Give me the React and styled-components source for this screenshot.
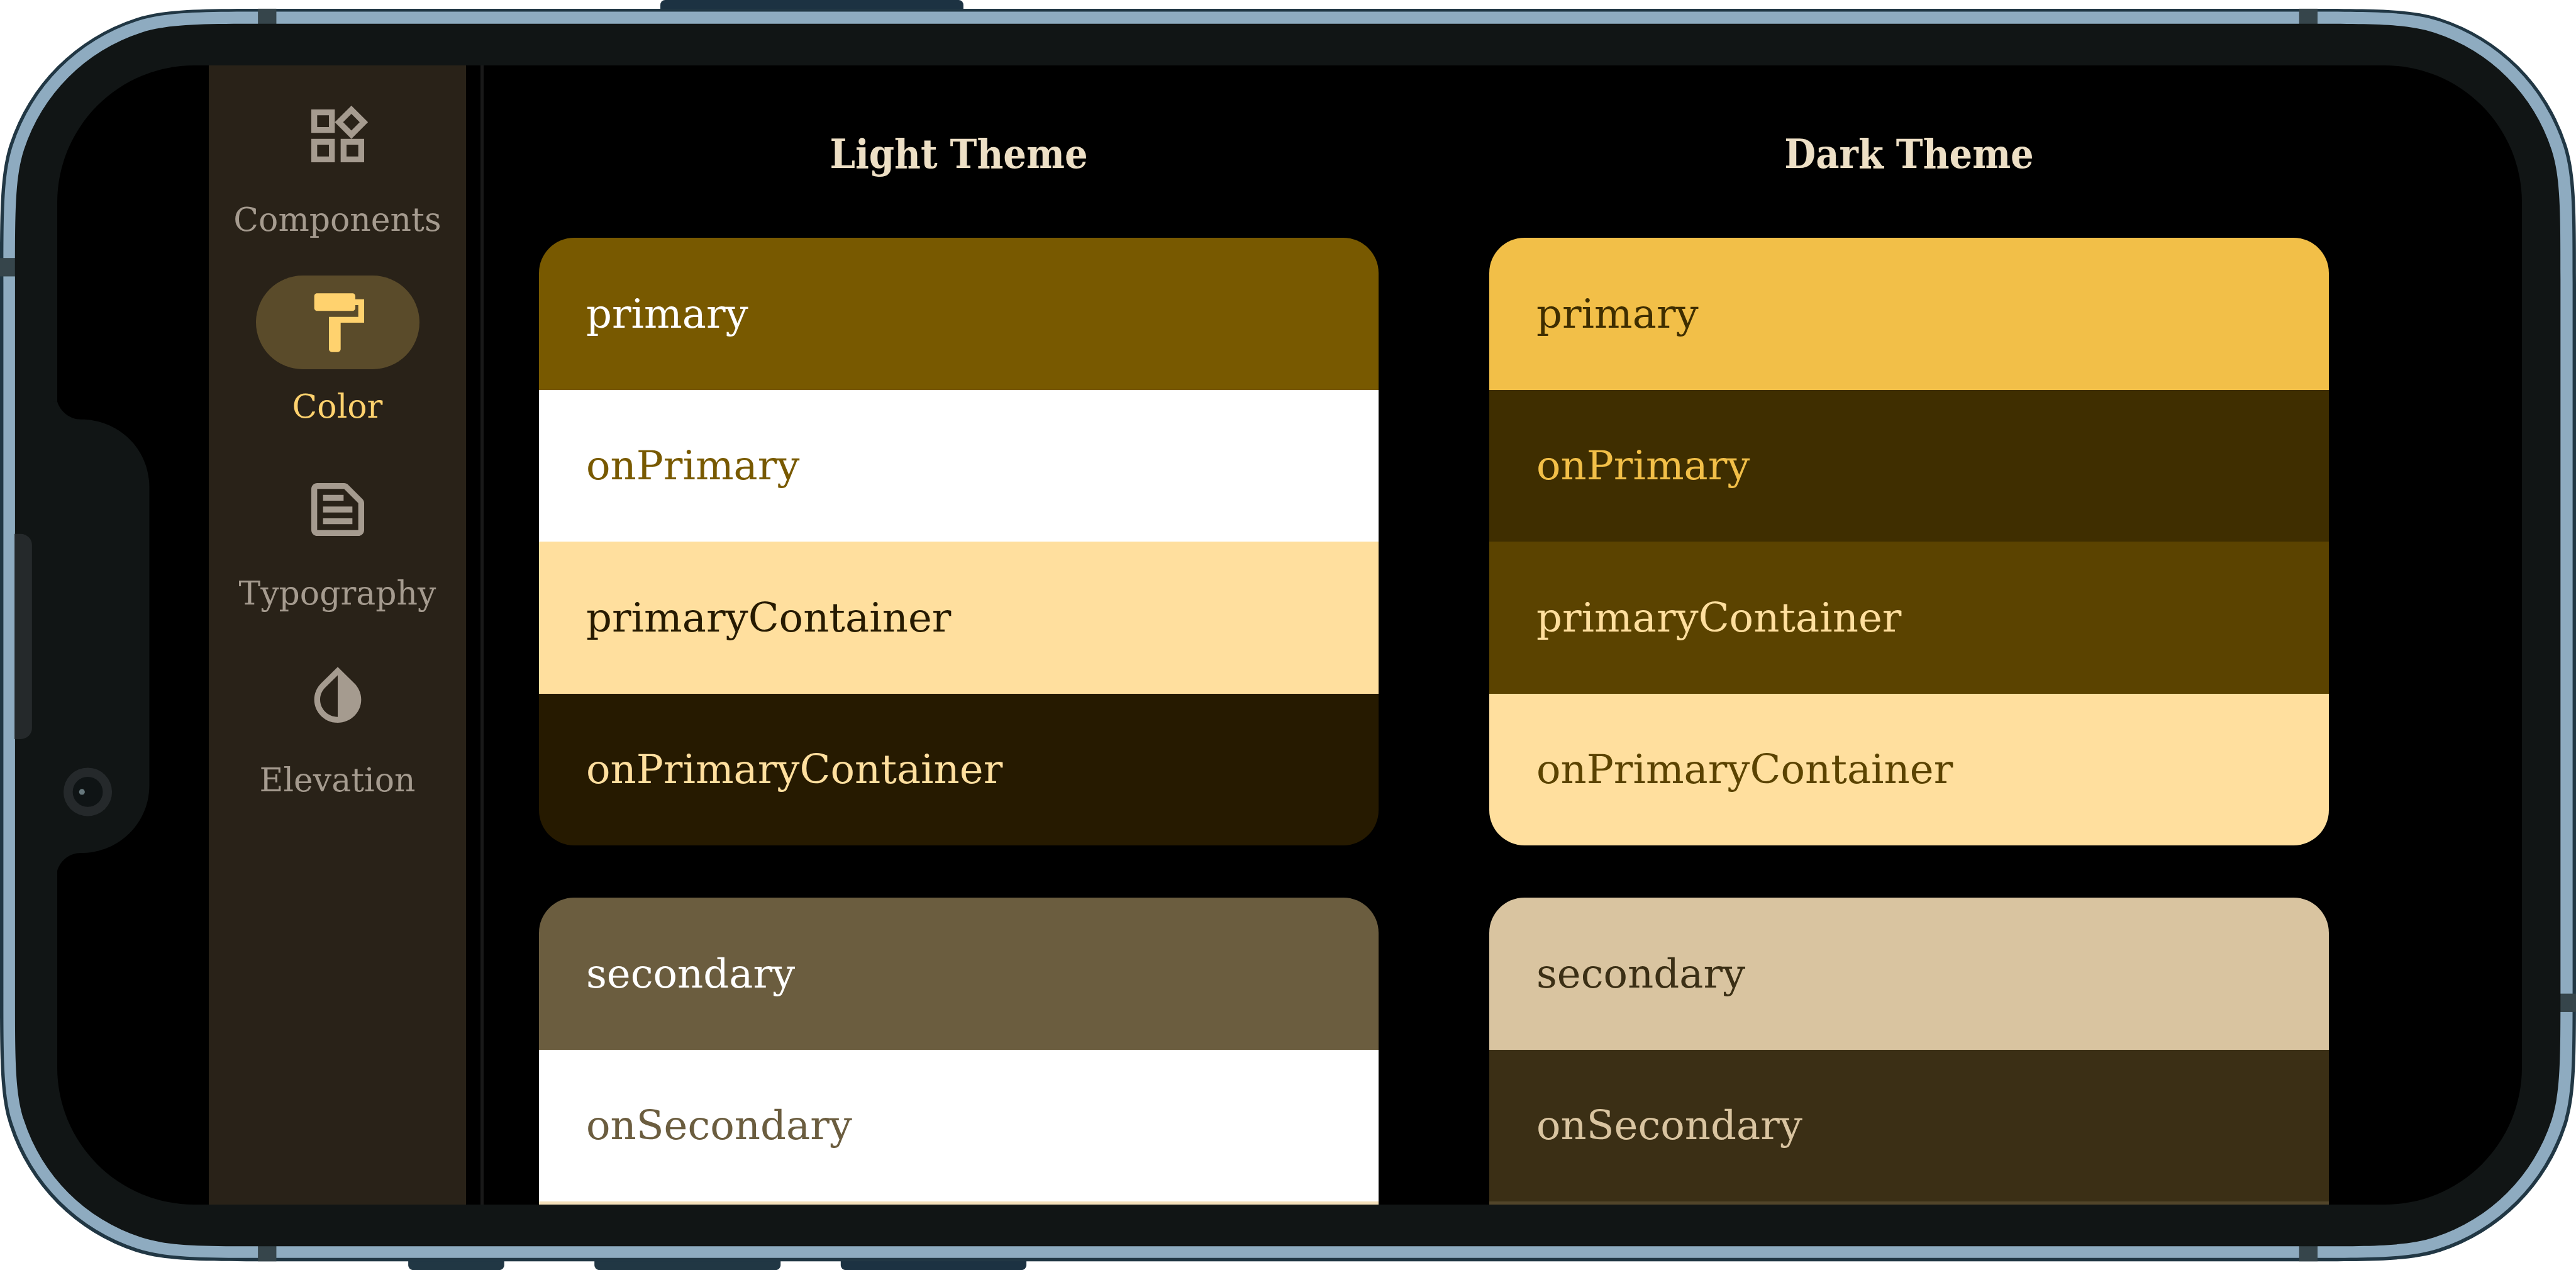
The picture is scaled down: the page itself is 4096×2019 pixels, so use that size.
import React, { useState } from "react";
import styled, { createGlobalStyle } from "styled-components";

const GlobalStyle = createGlobalStyle`
  *, *::before, *::after { box-sizing: border-box; }
  body {
    margin: 0;
    background: #ffffff;
    font-family: "Roboto Slab", "DejaVu Serif", serif;
  }
  h2, ul { margin: 0; padding: 0; }
`;

const Device = styled.main`
  position: relative;
  display: flex;
  width: 100%;
  aspect-ratio: 5313 / 2619;
  padding: 104px 86px 104px 91px;
  overflow: hidden;
`;

const DeviceArt = styled.svg`
  position: absolute;
  inset: 0;
  width: 100%;
  height: 100%;
  pointer-events: none;
`;

const Screen = styled.div`
  position: relative;
  display: flex;
  flex: 1;
  min-width: 0;
  min-height: 0;
  padding-left: 241px;
  border-radius: 218px;
  background: #000000;
  overflow: hidden;
`;

const Rail = styled.nav`
  display: flex;
  flex-direction: column;
  gap: 53px;
  flex: none;
  width: 409px;
  padding-top: 37px;
  background: #292218;
`;

const Destination = styled.button`
  display: flex;
  flex-direction: column;
  align-items: center;
  gap: 23px;
  padding: 0;
  border: 0;
  background: none;
  font: inherit;
  font-size: 52px;
  line-height: 72px;
  color: ${(p) => (p.$selected ? "#ffd26e" : "#a59b8f")};
  cursor: pointer;
`;

const Indicator = styled.span`
  display: flex;
  align-items: center;
  justify-content: center;
  width: 260px;
  height: 149px;
  border-radius: 75px;
  background: ${(p) => (p.$selected ? "#5a4b2a" : "transparent")};
`;

const Glyph = styled.svg`
  width: 112px;
  height: 112px;
  fill: currentColor;
`;

const Divider = styled.div`
  flex: none;
  width: 5px;
  margin-left: 23px;
  background: #191919;
`;

const Schemes = styled.div`
  display: flex;
  flex: 1;
  min-width: 0;
  gap: 176px;
  padding: 0 307px 0 88px;
`;

const Scheme = styled.section`
  display: flex;
  flex-direction: column;
  flex: 1;
  min-width: 0;
`;

const SchemeTitle = styled.h2`
  flex: none;
  padding: 96px 0 88px;
  font-family: "Roboto Slab", "DejaVu Serif Condensed", "DejaVu Serif", serif;
  font-size: 64px;
  line-height: 90px;
  font-weight: 700;
  text-align: center;
  color: #eddfc5;
`;

const Groups = styled.div`
  display: flex;
  flex-direction: column;
  gap: 83px;
`;

const Group = styled.ul`
  display: flex;
  flex-direction: column;
  flex: none;
  height: 966px;
  border-radius: 56px;
  list-style: none;
  overflow: hidden;
`;

const Swatch = styled.li`
  display: flex;
  align-items: center;
  flex: 1;
  padding: 0 75px;
  font-size: 64px;
  line-height: 90px;
  background: ${(p) => p.$bg};
  color: ${(p) => p.$fg};
`;

const destinations = [
  {
    label: "Components",
    path: "M16.66 4.52l2.83 2.83-2.83 2.83-2.83-2.83 2.83-2.83M9 5v4H5V5h4m10 10v4h-4v-4h4M9 15v4H5v-4h4m7.66-13.31L11 7.34 16.66 13l5.66-5.66-5.66-5.65zM11 3H3v8h8V3zm10 10h-8v8h8v-8zm-10 0H3v8h8v-8z",
  },
  {
    label: "Color",
    path: "M18 4V3c0-.55-.45-1-1-1H5c-.55 0-1 .45-1 1v4c0 .55.45 1 1 1h12c.55 0 1-.45 1-1V6h1v4H9v11c0 .55.45 1 1 1h2c.55 0 1-.45 1-1v-9h8V4h-3z",
  },
  {
    label: "Typography",
    path: "M14.17 5L19 9.83V19H5V5h9.17m0-2H5c-1.1 0-2 .9-2 2v14c0 1.1.9 2 2 2h14c1.1 0 2-.9 2-2V9.83c0-.53-.21-1.04-.59-1.41l-4.83-4.83c-.37-.38-.88-.59-1.41-.59zM7 15h10v2H7v-2zm0-4h10v2H7v-2zm0-4h7v2H7V7z",
  },
  {
    label: "Elevation",
    path: "M12 4.81V19c-3.31 0-6-2.63-6-5.87 0-1.56.62-3.03 1.75-4.14L12 4.81M12 2L6.35 7.56C4.9 8.99 4 10.96 4 13.13 4 17.48 7.58 21 12 21s8-3.52 8-7.87c0-2.17-.9-4.14-2.35-5.57L12 2z",
  },
];

// Each swatch is [name, background, text colour].
const schemes = [
  {
    title: "Light Theme",
    groups: [
      [
        ["primary", "#785900", "#ffffff"],
        ["onPrimary", "#ffffff", "#785900"],
        ["primaryContainer", "#ffdf9e", "#261a00"],
        ["onPrimaryContainer", "#261a00", "#ffdf9e"],
      ],
      [
        ["secondary", "#6b5d3f", "#ffffff"],
        ["onSecondary", "#ffffff", "#6b5d3f"],
        ["", "#f5e0bb", "#241a04"],
        ["", "#241a04", "#f5e0bb"],
      ],
    ],
  },
  {
    title: "Dark Theme",
    groups: [
      [
        ["primary", "#f2bf48", "#3f2e00"],
        ["onPrimary", "#3f2e00", "#f2bf48"],
        ["primaryContainer", "#5b4300", "#ffdf9e"],
        ["onPrimaryContainer", "#ffdf9e", "#5b4300"],
      ],
      [
        ["secondary", "#d9c4a0", "#3b2f15"],
        ["onSecondary", "#3b2f15", "#d9c4a0"],
        ["", "#52452a", "#f5e0bb"],
        ["", "#f5e0bb", "#52452a"],
      ],
    ],
  },
];

// Rounded rectangle whose corners ease from the straight edge into the arc.
function smoothRect(x, y, w, h, r) {
  const k = 0.4;
  const rad = Math.PI / 180;
  const theta = 45 * k * rad;
  const p = (1 + k) * r;
  const c = r * Math.tan(theta / 2) * Math.cos(theta);
  const d = c * Math.tan(theta);
  const s = Math.sin(45 * (1 - k) * rad) * r * Math.SQRT2;
  const b = (p - s - c - d) / 3;
  const a = 2 * b;
  return [
    `M${x + w - p} ${y}`,
    `c${a} 0 ${a + b} 0 ${a + b + c} ${d}`,
    `a${r} ${r} 0 0 1 ${s} ${s}`,
    `c${d} ${c} ${d} ${b + c} ${d} ${a + b + c}`,
    `V${y + h - p}`,
    `c0 ${a} 0 ${a + b} ${-d} ${a + b + c}`,
    `a${r} ${r} 0 0 1 ${-s} ${s}`,
    `c${-c} ${d} ${-(b + c)} ${d} ${-(a + b + c)} ${d}`,
    `H${x + p}`,
    `c${-a} 0 ${-(a + b)} 0 ${-(a + b + c)} ${-d}`,
    `a${r} ${r} 0 0 1 ${-s} ${-s}`,
    `c${-d} ${-c} ${-d} ${-(b + c)} ${-d} ${-(a + b + c)}`,
    `V${y + p}`,
    `c0 ${-a} 0 ${-(a + b)} ${d} ${-(a + b + c)}`,
    `a${r} ${r} 0 0 1 ${s} ${-s}`,
    `c${c} ${-d} ${b + c} ${-d} ${a + b + c} ${-d}`,
    "Z",
  ].join("");
}

function DeviceBody() {
  return (
    <DeviceArt viewBox="0 0 5313 2619" preserveAspectRatio="none" aria-hidden="true">
      <g fill="#1c3242">
        <rect x="1362" y="0" width="625" height="40" rx="10" />
        <rect x="1734" y="2580" width="383" height="39" rx="10" />
      </g>
      <g fill="#213744">
        <rect x="842" y="2580" width="198" height="39" rx="10" />
        <rect x="1226" y="2580" width="384" height="39" rx="10" />
      </g>
      <path d={smoothRect(0, 18, 5313, 2583, 405)} fill="#213744" />
      <path d={smoothRect(7, 24, 5299, 2570, 399)} fill="#8eabc0" />
      <g fill="#36454b">
        <rect x="532" y="18" width="38" height="40" />
        <rect x="4742" y="18" width="38" height="40" />
        <rect x="532" y="2560" width="38" height="41" />
        <rect x="4742" y="2560" width="38" height="41" />
        <rect x="0" y="532" width="40" height="38" />
        <rect x="5270" y="2049" width="43" height="38" />
      </g>
      <path d={smoothRect(31, 49, 5250, 2521, 376)} fill="#111515" />
    </DeviceArt>
  );
}

function Notch() {
  return (
    <DeviceArt viewBox="0 0 5313 2619" preserveAspectRatio="none" aria-hidden="true">
      <path
        d="M110 828H118C124 848 143 865 167 865C245 865 308 926 308 1004V1619C308 1698 245 1759 167 1759C143 1759 124 1775 118 1796H110Z"
        fill="#111515"
      />
      <path d="M30 1101H43A23 23 0 0 1 66 1124V1501A23 23 0 0 1 43 1524H30Z" fill="#25292b" />
      <circle cx="181" cy="1633" r="50" fill="#25292b" />
      <circle cx="181" cy="1633" r="31" fill="#0f1415" />
      <circle cx="169" cy="1633" r="6" fill="#66777c" />
    </DeviceArt>
  );
}

export default function App() {
  const [selected, setSelected] = useState("Color");
  return (
    <>
      <GlobalStyle />
      <Device>
        <DeviceBody />
        <Screen>
          <Rail aria-label="Sections">
            {destinations.map(({ label, path }) => (
              <Destination
                key={label}
                type="button"
                $selected={label === selected}
                aria-current={label === selected ? "page" : undefined}
                onClick={() => setSelected(label)}
              >
                <Indicator $selected={label === selected}>
                  <Glyph viewBox="0 0 24 24" aria-hidden="true">
                    <path d={path} />
                  </Glyph>
                </Indicator>
                {label}
              </Destination>
            ))}
          </Rail>
          <Divider />
          <Schemes>
            {schemes.map(({ title, groups }) => (
              <Scheme key={title}>
                <SchemeTitle>{title}</SchemeTitle>
                <Groups>
                  {groups.map((swatches) => (
                    <Group key={swatches[0][0]}>
                      {swatches.map(([name, bg, fg]) => (
                        <Swatch key={bg} $bg={bg} $fg={fg}>
                          {name}
                        </Swatch>
                      ))}
                    </Group>
                  ))}
                </Groups>
              </Scheme>
            ))}
          </Schemes>
        </Screen>
        <Notch />
      </Device>
    </>
  );
}
